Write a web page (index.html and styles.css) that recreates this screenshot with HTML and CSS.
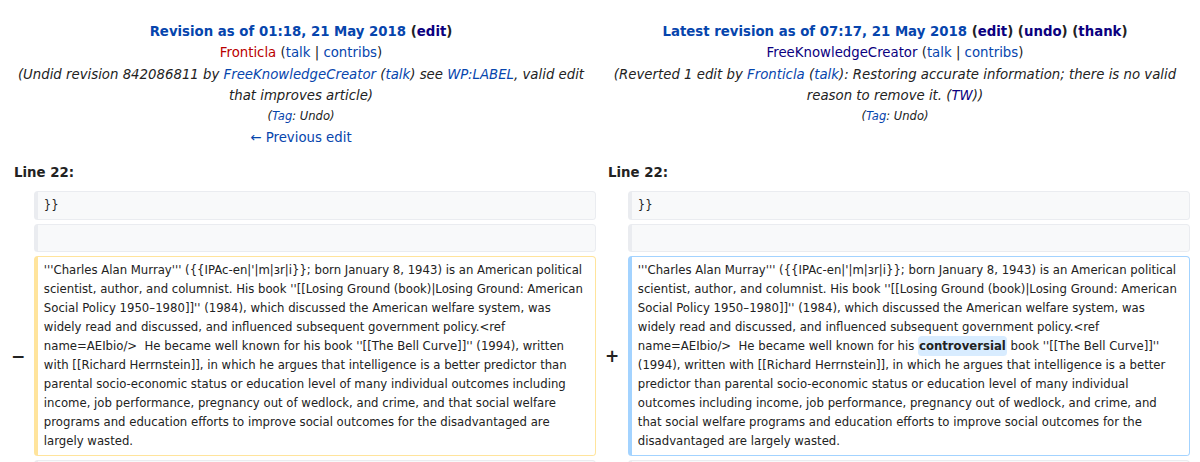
FILE: index.html
```html
<!DOCTYPE html>
<html lang="en">
<head>
<meta charset="utf-8">
<title>Charles Murray: Difference between revisions</title>
<link rel="stylesheet" href="styles.css">
</head>
<body>
<div class="diff">
  <div class="title">
    <div class="tline"><strong><a class="lnk">Revision as of 01:18, 21 May 2018</a> <span class="plain">(<a class="vis">edit</a>)</span></strong></div>
    <div class="tline"><a class="new">Fronticla</a> (<a class="lnk">talk</a> | <a class="lnk">contribs</a>)</div>
    <div class="tline comment">(Undid revision 842086811 by <a class="lnk">FreeKnowledgeCreator</a> (<a class="lnk">talk</a>) see <a class="lnk">WP:LABEL</a>, valid edit that improves article)</div>
    <div class="tline tags">(<a class="lnk">Tag</a>: Undo)</div>
    <div class="tline"><a class="lnk">← Previous edit</a></div>
  </div>
  <div class="title">
    <div class="tline"><strong><a class="lnk">Latest revision as of 07:17, 21 May 2018</a> <span class="plain">(<a class="vis">edit</a>) (<a class="vis">undo</a>) (<a class="vis">thank</a>)</span></strong></div>
    <div class="tline"><a class="vis">FreeKnowledgeCreator</a> (<a class="lnk">talk</a> | <a class="lnk">contribs</a>)</div>
    <div class="tline comment">(Reverted 1 edit by <a class="lnk">Fronticla</a> (<a class="lnk">talk</a>): Restoring accurate information; there is no valid reason to remove it. (<a class="vis">TW</a>))</div>
    <div class="tline tags">(<a class="lnk">Tag</a>: Undo)</div>
  </div>

  <div class="lineno">Line 22:</div>
  <div class="lineno">Line 22:</div>

  <div class="marker"></div>
  <div class="line context">}}</div>
  <div class="marker"></div>
  <div class="line context">}}</div>

  <div class="marker"></div>
  <div class="line context"><br></div>
  <div class="marker"></div>
  <div class="line context"><br></div>

  <div class="marker">−</div>
  <div class="line deleted">'''Charles Alan Murray''' ({{IPAc-en|'|m|ɜr|i}}; born January 8, 1943) is an American political scientist, author, and columnist. His book ''[[Losing Ground (book)|Losing Ground: American Social Policy 1950–1980]]'' (1984), which discussed the American welfare system, was widely read and discussed, and influenced subsequent government policy.&lt;ref name=AEIbio/&gt;  He became well known for his book ''[[The Bell Curve]]'' (1994), written with [[Richard Herrnstein]], in which he argues that intelligence is a better predictor than parental socio-economic status or education level of many individual outcomes including income, job performance, pregnancy out of wedlock, and crime, and that social welfare programs and education efforts to improve social outcomes for the disadvantaged are largely wasted.</div>
  <div class="marker">+</div>
  <div class="line added">'''Charles Alan Murray''' ({{IPAc-en|'|m|ɜr|i}}; born January 8, 1943) is an American political scientist, author, and columnist. His book ''[[Losing Ground (book)|Losing Ground: American Social Policy 1950–1980]]'' (1984), which discussed the American welfare system, was widely read and discussed, and influenced subsequent government policy.&lt;ref name=AEIbio/&gt;  He became well known for his <span class="change">controversial</span> book ''[[The Bell Curve]]'' (1994), written with [[Richard Herrnstein]], in which he argues that intelligence is a better predictor than parental socio-economic status or education level of many individual outcomes including income, job performance, pregnancy out of wedlock, and crime, and that social welfare programs and education efforts to improve social outcomes for the disadvantaged are largely wasted.</div>

  <div class="marker"></div>
  <div class="line context"><br></div>
  <div class="marker"></div>
  <div class="line context"><br></div>
</div>
</body>
</html>
```

FILE: styles.css
```css
html, body {
  margin: 0;
  padding: 0;
  background: #ffffff;
  overflow: hidden;
}

body {
  font-family: "DejaVu Sans", "Noto Sans", sans-serif;
  font-size: 13.3px;
  color: #222222;
}

a {
  text-decoration: none;
  cursor: pointer;
}

.lnk { color: #0645ad; }
.vis { color: #0b0080; }
.new { color: #ba0000; }

.diff {
  display: grid;
  grid-template-columns: 24px 562px 24px 562px;
  column-gap: 4px;
  row-gap: 4px;
  padding: 4px 0 0 6px;
}

.title {
  grid-column: span 2;
  text-align: center;
  padding: 17px 6.65px 5.2px;
}

.tline {
  line-height: 21.3px;
}

.plain {
  color: #222222;
}

.comment {
  font-style: italic;
}

.tags {
  font-size: 87%;
  font-style: italic;
}

.lineno {
  grid-column: span 2;
  font-weight: bold;
  line-height: 21px;
  padding: 4px 8px;
}

.marker {
  display: flex;
  align-items: center;
  justify-content: center;
  font-weight: bold;
  font-size: 17px;
  color: #222222;
}

.line {
  font-size: 11.7px;
  line-height: 19px;
  white-space: pre-wrap;
  overflow-wrap: break-word;
  border-style: solid;
  border-width: 1px 1px 1px 4px;
  border-radius: 0.33em;
  padding: 3.86px 5.85px;
  color: #222222;
}

.context {
  background: #f8f9fa;
  border-color: #eaecf0;
}

.deleted {
  border-color: #ffe49c;
  background: #ffffff;
}

.added {
  border-color: #a3d3ff;
  background: #ffffff;
}

.change {
  font-weight: bold;
  background: #d8ecff;
  border-radius: 0.33em;
  padding: 0.25em 1px;
}
```
